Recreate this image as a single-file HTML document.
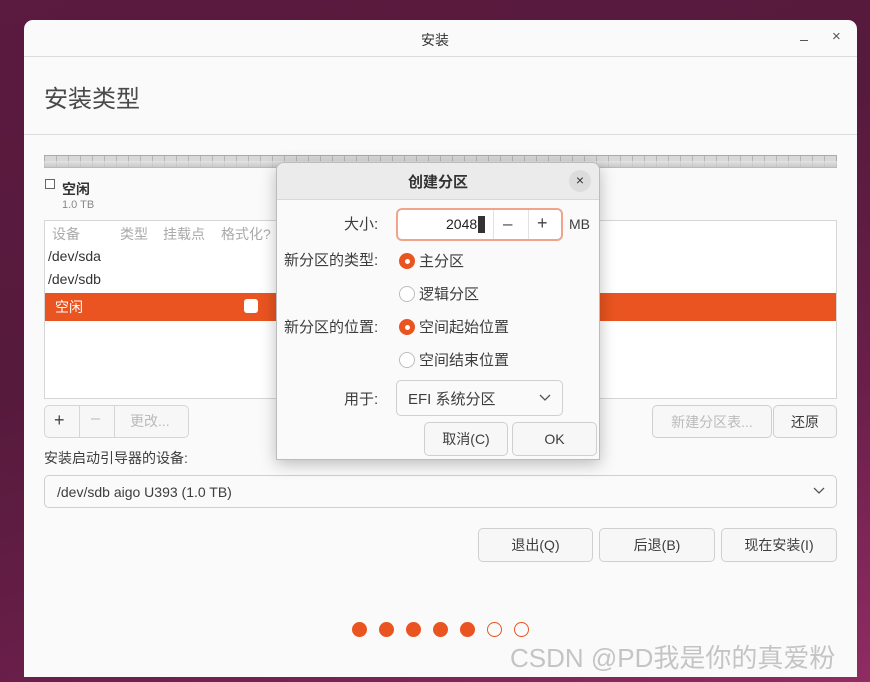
<!DOCTYPE html>
<html><head><meta charset="utf-8"><style>
*{box-sizing:border-box;margin:0;padding:0}
body{width:870px;height:682px;overflow:hidden;position:relative;font-family:"Liberation Sans","Noto Sans CJK SC",sans-serif;color:#3d3d3d;
background:linear-gradient(160deg,#5b1a40 0%,#561a3c 40%,#6a1f4a 70%,#8f2c63 100%)}
.a{position:absolute}
.win{left:24px;top:20px;width:833px;height:657px;background:#fafafa;border-radius:9px 9px 0 0}
.btn{position:absolute;border:1px solid #cfcfcf;border-radius:5px;background:#f7f7f7;font-size:14px;display:flex;align-items:center;justify-content:center;color:#3d3d3d}
.t{position:absolute;white-space:nowrap}
.dot{position:absolute;width:15px;height:15px;border-radius:50%;background:#e95420;top:622px}
.dot.o{background:none;border:1.5px solid #e95420}
.radio{position:absolute;width:16px;height:16px;border-radius:50%;left:399px;border:1px solid #bdbdbd;background:#fff}
.radio.on{background:#e95420;border-color:#e95420}
.radio.on::after{content:"";position:absolute;left:4.5px;top:4.5px;width:5px;height:5px;border-radius:50%;background:#fff}
</style></head><body>
<div class="a win"></div>
<div class="t" style="left:0;width:870px;text-align:center;top:30px;font-size:14px;color:#333">安装</div>
<div class="a" style="left:800px;top:40px;width:8px;height:1px;background:#555"></div>
<div class="t" style="left:832px;top:28px;font-size:15px;color:#555">×</div>
<div class="a" style="left:24px;top:56px;width:833px;height:1px;background:#dcdcdc"></div>
<div class="t" style="left:44px;top:79px;font-size:24px;color:#4a4a4a">安装类型</div>
<div class="a" style="left:24px;top:134px;width:833px;height:1px;background:#dcdcdc"></div>
<!-- partition bar -->
<div class="a" style="left:44px;top:155px;width:793px;height:13px;border:1px solid #aaa;background:repeating-linear-gradient(90deg,#d8d8d8 0,#d8d8d8 11px,#b5b5b5 11px,#b5b5b5 12px),#ddd"></div>
<div class="a" style="left:44px;top:161px;width:793px;height:7px;background:linear-gradient(#e8e8e8,#bdbdbd);opacity:.7"></div>
<div class="a" style="left:45px;top:179px;width:10px;height:10px;border:1px solid #666;background:#fff"></div>
<div class="t" style="left:62px;top:179px;font-size:14px;font-weight:bold;color:#333">空闲</div>
<div class="t" style="left:62px;top:199px;font-size:11px;color:#888">1.0 TB</div>
<!-- table -->
<div class="a" style="left:44px;top:220px;width:793px;height:179px;border:1px solid #d6d6d6;background:#fff"></div>
<div class="t" style="left:52px;top:224px;font-size:14px;color:#aaa">设备</div>
<div class="t" style="left:120px;top:224px;font-size:14px;color:#aaa">类型</div>
<div class="t" style="left:163px;top:224px;font-size:14px;color:#aaa">挂载点</div>
<div class="t" style="left:221px;top:224px;font-size:14px;color:#aaa">格式化?</div>
<div class="t" style="left:48px;top:248px;font-size:14px;color:#333">/dev/sda</div>
<div class="t" style="left:48px;top:271px;font-size:14px;color:#333">/dev/sdb</div>
<div class="a" style="left:45px;top:293px;width:791px;height:28px;background:#e95420"></div>
<div class="t" style="left:55px;top:297px;font-size:14px;color:#fff">空闲</div>
<div class="a" style="left:244px;top:299px;width:14px;height:14px;border-radius:3px;background:#fff"></div>
<!-- buttons -->
<div class="a" style="left:44px;top:405px;width:145px;height:33px;border:1px solid #d6d6d6;border-radius:5px;background:#f7f7f7"></div>
<div class="a" style="left:79px;top:406px;width:1px;height:31px;background:#d6d6d6"></div>
<div class="a" style="left:114px;top:406px;width:1px;height:31px;background:#d6d6d6"></div>
<div class="t" style="left:54px;top:410px;font-size:18px;color:#444">+</div>
<div class="t" style="left:91px;top:410px;font-size:16px;color:#bbb">–</div>
<div class="t" style="left:130px;top:411px;font-size:14px;color:#bbb">更改...</div>
<div class="btn" style="left:652px;top:405px;width:120px;height:33px;color:#bbb">新建分区表...</div>
<div class="btn" style="left:773px;top:405px;width:64px;height:33px">还原</div>
<div class="t" style="left:44px;top:448px;font-size:14px">安装启动引导器的设备:</div>
<div class="btn" style="left:44px;top:475px;width:793px;height:33px;justify-content:flex-start;padding-left:12px;background:#fafafa">/dev/sdb aigo U393 (1.0 TB)</div>
<svg class="a" style="left:813px;top:487px" width="12" height="8"><path d="M1 1 L6 6 L11 1" fill="none" stroke="#555" stroke-width="1.3"/></svg>
<div class="btn" style="left:478px;top:528px;width:115px;height:34px">退出(Q)</div>
<div class="btn" style="left:599px;top:528px;width:116px;height:34px">后退(B)</div>
<div class="btn" style="left:721px;top:528px;width:116px;height:34px">现在安装(I)</div>
<div class="dot" style="left:352px"></div><div class="dot" style="left:379px"></div><div class="dot" style="left:406px"></div><div class="dot" style="left:433px"></div><div class="dot" style="left:460px"></div><div class="dot o" style="left:487px"></div><div class="dot o" style="left:514px"></div>
<div class="t" style="left:510px;top:638px;font-size:26px;color:#c4c4c4;text-shadow:0 0 1px #fff">CSDN @PD我是你的真爱粉</div>
<!-- dialog -->
<div class="a" style="left:276px;top:162px;width:324px;height:298px;background:#fafafa;border:1px solid #bcbcbc;border-radius:8px 8px 0 0;box-shadow:0 4px 16px rgba(0,0,0,.25);overflow:hidden">
<div style="height:37px;background:#ebebeb;border-bottom:1px solid #d8d8d8"></div></div>
<div class="t" style="left:276px;width:324px;text-align:center;top:171px;font-size:15px;font-weight:bold;color:#333">创建分区</div>
<div class="a" style="left:569px;top:170px;width:22px;height:22px;border-radius:50%;background:#dcdcdc;font-size:14px;text-align:center;line-height:21px;color:#333">×</div>
<div class="t" style="left:344px;top:213px;font-size:15px">大小:</div>
<div class="a" style="left:396px;top:208px;width:167px;height:33px;border:2px solid #f0a58a;border-radius:6px;background:#fff"></div>
<div class="a" style="left:493px;top:210px;width:1px;height:29px;background:#e2e2e2"></div>
<div class="a" style="left:528px;top:210px;width:1px;height:29px;background:#e2e2e2"></div>
<div class="t" style="left:446px;top:216px;font-size:14px;color:#222">2048</div>
<div class="a" style="left:478px;top:216px;width:7px;height:17px;background:#333"></div>
<div class="t" style="left:503px;top:214px;font-size:17px;color:#444">–</div>
<div class="t" style="left:537px;top:213px;font-size:18px;color:#444">+</div>
<div class="t" style="left:569px;top:216px;font-size:14px">MB</div>
<div class="t" style="left:284px;top:249px;font-size:15px">新分区的类型:</div>
<div class="radio on" style="top:253px"></div><div class="t" style="left:419px;top:250px;font-size:15px">主分区</div>
<div class="radio" style="top:286px"></div><div class="t" style="left:419px;top:283px;font-size:15px">逻辑分区</div>
<div class="t" style="left:284px;top:316px;font-size:15px">新分区的位置:</div>
<div class="radio on" style="top:319px"></div><div class="t" style="left:419px;top:316px;font-size:15px">空间起始位置</div>
<div class="radio" style="top:352px"></div><div class="t" style="left:419px;top:349px;font-size:15px">空间结束位置</div>
<div class="t" style="left:344px;top:388px;font-size:15px">用于:</div>
<div class="btn" style="left:396px;top:380px;width:167px;height:36px;justify-content:flex-start;padding-left:11px;font-size:15px;background:#fafafa">EFI 系统分区</div>
<svg class="a" style="left:539px;top:394px" width="12" height="8"><path d="M1 1 L6 6 L11 1" fill="none" stroke="#555" stroke-width="1.3"/></svg>
<div class="btn" style="left:424px;top:422px;width:84px;height:34px">取消(C)</div>
<div class="btn" style="left:512px;top:422px;width:85px;height:34px">OK</div>
</body></html>
